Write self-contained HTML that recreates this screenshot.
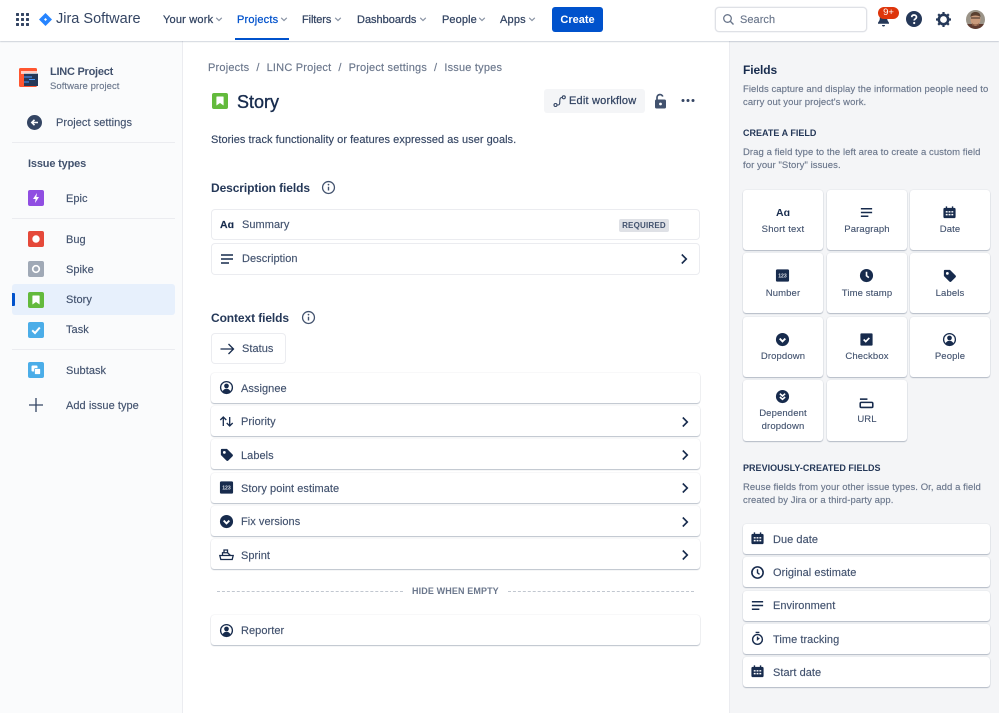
<!DOCTYPE html>
<html lang="en"><head><meta charset="utf-8"><title>Story - Issue types</title>
<style>
html,body{margin:0;padding:0;width:999px;height:713px;overflow:hidden;background:#fff}
body{position:relative;font-family:"Liberation Sans",sans-serif;color:#42526E;font-size:11px}
.t{position:absolute;white-space:nowrap;line-height:16px;height:16px;margin-top:1px;font-size:11px;color:#42526E;letter-spacing:.05px;-webkit-text-stroke:.15px currentColor}
.a{position:absolute}
.c{position:absolute;background:#fff;border-radius:3px;box-sizing:border-box}
.m{box-shadow:0 0 0 1px #ebecf0;left:212px;width:487px;height:29px}
.s{box-shadow:0 1px 1px rgba(9,30,66,.25),0 0 1px rgba(9,30,66,.2);height:30px}
.g{box-shadow:0 1px 1px rgba(9,30,66,.25),0 0 1px rgba(9,30,66,.2);width:80px}
.gt{position:absolute;left:0;right:0;margin-top:1px;text-align:center;font-size:9.5px;line-height:13px;color:#42526E;letter-spacing:.12px;-webkit-text-stroke:.12px currentColor}
.nav{font-size:11px;color:#344563;letter-spacing:.1px;-webkit-text-stroke:.25px currentColor}
.d{font-size:9.5px;color:#6B778C;letter-spacing:.07px;line-height:13px;height:26px}
.h{font-size:9px;font-weight:700;color:#253858;letter-spacing:.02px;-webkit-text-stroke:0}
.hr{position:absolute;height:1px;background:#ebecf0;left:12px;width:163px}
svg{position:absolute;overflow:visible}
</style></head><body>
<svg width="0" height="0" style="position:absolute"><defs>
<symbol id="para" viewBox="0 0 16 16"><path d="M2 3.200h12v1.600H2zM2 7.200h12v1.600H2zM2 11.200h8v1.600H2z" fill="#172B4D"/></symbol>
<symbol id="cal" viewBox="0 0 16 16"><path fill="#172B4D" fill-rule="evenodd" d="M3 3h1V1.500h1.500V3h5V1.500H12V3h1a1.500 1.500 0 0 1 1.500 1.500v8A1.500 1.500 0 0 1 13 14H3a1.500 1.500 0 0 1-1.500-1.500v-8A1.500 1.500 0 0 1 3 3zM4 6.500V8h2V6.500zm3 0V8h2V6.500zm3 0V8h2V6.500zM4 9.500V11h2V9.500zm3 0V11h2V9.500zm3 0V11h2V9.500z"/></symbol>
<symbol id="num" viewBox="0 0 16 16"><rect x="1" y="1.500" width="14" height="13" rx="1.500" fill="#172B4D"/><text x="8" y="10" text-anchor="middle" font-family="Liberation Sans, sans-serif" font-size="5.500" font-weight="700" fill="#dfe3ea">123</text></symbol>
<symbol id="clock" viewBox="0 0 16 16"><circle cx="8" cy="8" r="7" fill="#172B4D"/><path d="M8 4v4.300l2.500 2" stroke="#fff" stroke-width="1.700" fill="none"/></symbol>
<symbol id="clockO" viewBox="0 0 16 16"><circle cx="8" cy="8" r="6" fill="none" stroke="#172B4D" stroke-width="1.700"/><path d="M8 4.500v3.800l2.200 1.700" stroke="#172B4D" stroke-width="1.500" fill="none"/></symbol>
<symbol id="tag" viewBox="0 0 16 16"><path fill="#172B4D" fill-rule="evenodd" d="M2 3a1 1 0 0 1 1-1h5.500l6 6a1.300 1.300 0 0 1 0 1.800l-4.700 4.700a1.300 1.300 0 0 1-1.800 0l-6-6zm3.700 1.200a1.500 1.500 0 1 0 0 3 1.500 1.500 0 0 0 0-3z"/></symbol>
<symbol id="drop" viewBox="0 0 16 16"><circle cx="8" cy="8" r="7" fill="#172B4D"/><path d="M5 7l3 3 3-3" stroke="#fff" stroke-width="2" fill="none"/></symbol>
<symbol id="dep" viewBox="0 0 16 16"><circle cx="8" cy="8" r="7" fill="#172B4D"/><path d="M5.200 5l2.800 2.500L10.800 5M5.200 8.500L8 11l2.800-2.500" stroke="#fff" stroke-width="1.700" fill="none"/></symbol>
<symbol id="check" viewBox="0 0 16 16"><rect x="1.500" y="1.500" width="13" height="13" rx="1" fill="#172B4D"/><path d="M5 8l2.200 2.200L11 6.300" stroke="#fff" stroke-width="1.800" fill="none"/></symbol>
<symbol id="person" viewBox="0 0 16 16"><circle cx="8" cy="8" r="6.300" fill="#fff" stroke="#172B4D" stroke-width="1.400"/><circle cx="8" cy="6.300" r="2.500" fill="#172B4D"/><path d="M3.800 12.300c.6-2 2.200-3 4.200-3s3.600 1 4.200 3A6 6 0 0 1 8 14a6 6 0 0 1-4.200-1.700z" fill="#172B4D"/></symbol>
<symbol id="url" viewBox="0 0 16 16"><path d="M1 2.500h8v1.700H1z" fill="#172B4D"/><rect x="1.300" y="6.800" width="13.400" height="5.400" rx="1.200" fill="none" stroke="#172B4D" stroke-width="1.700"/></symbol>
<symbol id="chev" viewBox="0 0 16 16"><path d="M5.800 3.500L10.300 8l-4.500 4.500" stroke="#172B4D" stroke-width="1.600" fill="none"/></symbol>
<symbol id="dn" viewBox="0 0 10 10"><path d="M2.200 3.800L5 6.500l2.800-2.700" stroke="#8993a4" stroke-width="1.200" fill="none"/></symbol>
<symbol id="info" viewBox="0 0 16 16"><circle cx="8" cy="8" r="5.600" fill="none" stroke="#42526E" stroke-width="1.200"/><path d="M8 7.300v3.500" stroke="#42526E" stroke-width="1.300"/><circle cx="8" cy="5.300" r=".8" fill="#42526E"/></symbol>
<symbol id="story" viewBox="0 0 16 16"><rect width="16" height="16" rx="2" fill="#63BA3C"/><path d="M5 3.500h6a.6.6 0 0 1 .6.600v8.400L8 10l-3.600 2.500V4.100a.6.6 0 0 1 .6-.6z" fill="#fff"/></symbol>
</defs></svg>

<!-- Top bar -->
<div class="a" style="left:0;top:0;width:999px;height:41px;background:#fff;box-shadow:0 1px 1px rgba(9,30,66,.16),0 0 1px rgba(9,30,66,.1);z-index:3">
<svg style="left:16px;top:13px" width="13" height="13" viewBox="0 0 13 13"><g fill="#344563"><rect width="3" height="3" rx=".6"/><rect x="5" width="3" height="3" rx=".6"/><rect x="10" width="3" height="3" rx=".6"/><rect y="5" width="3" height="3" rx=".6"/><rect x="5" y="5" width="3" height="3" rx=".6"/><rect x="10" y="5" width="3" height="3" rx=".6"/><rect y="10" width="3" height="3" rx=".6"/><rect x="5" y="10" width="3" height="3" rx=".6"/><rect x="10" y="10" width="3" height="3" rx=".6"/></g></svg>
<svg style="left:39px;top:13px" width="13" height="13" viewBox="0 0 13 13"><path d="M6.500 0L13 6.500 6.500 13 0 6.500z" fill="#2684FF"/><path d="M6.500 5L8 6.500 6.500 8 5 6.500z" fill="#fff"/></svg>
<div class="t" style="left:56px;top:10px;font-size:14.5px;color:#344563;letter-spacing:0;-webkit-text-stroke:0">Jira Software</div>
<div class="t nav" style="left:163px;top:11px;letter-spacing:.2px">Your work</div><svg style="left:214px;top:14px" width="10" height="10"><use href="#dn"/></svg>
<div class="t nav" style="left:237px;top:11px;color:#0052CC;letter-spacing:.2px">Projects</div><svg style="left:279px;top:14px" width="10" height="10"><use href="#dn"/></svg>
<div class="a" style="left:235px;top:38px;width:54px;height:2px;background:#0052CC"></div>
<div class="t nav" style="left:302px;top:11px;letter-spacing:-.1px">Filters</div><svg style="left:333px;top:14px" width="10" height="10"><use href="#dn"/></svg>
<div class="t nav" style="left:357px;top:11px;letter-spacing:0">Dashboards</div><svg style="left:418px;top:14px" width="10" height="10"><use href="#dn"/></svg>
<div class="t nav" style="left:442px;top:11px">People</div><svg style="left:477px;top:14px" width="10" height="10"><use href="#dn"/></svg>
<div class="t nav" style="left:500px;top:11px;letter-spacing:.2px">Apps</div><svg style="left:527px;top:14px" width="10" height="10"><use href="#dn"/></svg>
<div class="a" style="left:552px;top:7px;width:51px;height:25px;background:#0052CC;border-radius:3px;color:#fff;text-align:center;line-height:26px;font-size:11px;font-weight:700">Create</div>
<div class="a" style="left:715px;top:7px;width:152px;height:25px;box-sizing:border-box;border:1px solid #DFE1E6;border-radius:4px;background:#fff;box-shadow:0 0 0 .5px #ebecf0"></div>
<svg style="left:722px;top:13px" width="13" height="13" viewBox="0 0 13 13"><circle cx="5.500" cy="5.500" r="3.800" fill="none" stroke="#6B778C" stroke-width="1.300"/><path d="M8.300 8.300l3.200 3.200" stroke="#6B778C" stroke-width="1.400"/></svg>
<div class="t" style="left:740px;top:11px;color:#6B778C">Search</div>
<svg style="left:876px;top:13px" width="15" height="15" viewBox="0 0 15 15"><path d="M7.500 1C4.800 1 3.800 3 3.800 5.500c0 2.500-1.800 3.500-1.800 4.500v.8h11V10c0-1-1.800-2-1.800-4.500C11.200 3 10.200 1 7.500 1zM6 12h3a1.500 1.500 0 0 1-3 0z" fill="#253858"/></svg>
<div class="a" style="left:878px;top:7px;width:21px;height:12px;background:#DE350B;border-radius:7px;color:#fff;font-size:9.5px;line-height:12px;text-align:center">9+</div>
<svg style="left:906px;top:11px" width="16" height="16" viewBox="0 0 16 16"><circle cx="8" cy="8" r="8" fill="#253858"/><path d="M5.700 6.200C5.800 4.800 6.800 4 8.100 4c1.400 0 2.400.9 2.400 2.100 0 1.800-2.300 1.900-2.300 3.400" stroke="#fff" stroke-width="1.700" fill="none"/><circle cx="8.200" cy="12" r="1.100" fill="#fff"/></svg>
<svg style="left:936px;top:12px" width="15" height="15" viewBox="0 0 15 15"><circle cx="7.500" cy="7.500" r="4.700" fill="none" stroke="#253858" stroke-width="2.600"/><path d="M7.500 0v3M7.500 12v3M0 7.500h3M12 7.500h3M2.200 2.200l2 2M10.800 10.800l2 2M2.200 12.800l2-2M10.800 4.200l2-2" stroke="#253858" stroke-width="2.200"/></svg>
<svg style="left:966px;top:10px" width="19" height="19" viewBox="0 0 19 19"><defs><clipPath id="av"><circle cx="9.500" cy="9.500" r="9.500"/></clipPath></defs><g clip-path="url(#av)"><rect width="19" height="19" fill="#9b9488"/><rect y="14" width="19" height="5" fill="#5f3b30"/><ellipse cx="9.500" cy="9.500" rx="5" ry="6.500" fill="#c99a7b"/><path d="M4.500 7c0-4 2.500-5 5-5s5 1 5 5c-2-2-8-2-10 0z" fill="#5a4030"/><path d="M5 8h9" stroke="#3a2a20" stroke-width="1"/><path d="M6 13c1 2 6 2 7 0v2.500H6z" fill="#8a5d45"/></g></svg>
</div>

<!-- Sidebar -->
<div class="a" style="left:0;top:41px;width:182px;height:672px;background:#FAFBFC;border-right:1px solid #ebecf0"></div>
<svg style="left:19px;top:68px" width="19" height="19" viewBox="0 0 19 19"><rect width="18" height="19" rx="1.500" fill="#FF5630"/><rect x="5" y="5" width="14" height="13" fill="#253858"/><rect x="2" y="3" width="17" height="3" fill="#fff" opacity=".7"/><path d="M5 9h8M10 11.500h6M5 14h5" stroke="#4C9AFF" stroke-width="1"/></svg>
<div class="t" style="left:50px;top:63px;font-weight:700;letter-spacing:-.25px;-webkit-text-stroke:0">LINC Project</div>
<div class="t" style="left:50px;top:78px;font-size:9.5px;color:#6B778C;letter-spacing:.05px">Software project</div>
<svg style="left:27px;top:115px" width="15" height="15" viewBox="0 0 15 15"><circle cx="7.500" cy="7.500" r="7.500" fill="#344563"/><path d="M11 7.500H5M7.500 4.800L4.800 7.500l2.700 2.700" stroke="#fff" stroke-width="1.600" fill="none"/></svg>
<div class="t" style="left:56px;top:114px">Project settings</div>
<div class="hr" style="top:142px"></div>
<div class="t" style="left:28px;top:155px;font-weight:700;letter-spacing:-.17px;-webkit-text-stroke:0">Issue types</div>
<svg style="left:28px;top:190px" width="16" height="16" viewBox="0 0 16 16"><rect width="16" height="16" rx="2" fill="#904EE2"/><path d="M9 3L5 9h2.600L7 13l4-6H8.400z" fill="#fff"/></svg>
<div class="t" style="left:66px;top:190px">Epic</div>
<div class="hr" style="top:218px"></div>
<svg style="left:28px;top:231px" width="16" height="16" viewBox="0 0 16 16"><rect width="16" height="16" rx="2" fill="#E5493A"/><circle cx="8" cy="8" r="3.700" fill="#fff"/></svg>
<div class="t" style="left:66px;top:231px">Bug</div>
<svg style="left:28px;top:261px" width="16" height="16" viewBox="0 0 16 16"><rect width="16" height="16" rx="2" fill="#A0A9B6"/><circle cx="8" cy="8" r="3.300" fill="none" stroke="#fff" stroke-width="1.700"/></svg>
<div class="t" style="left:66px;top:261px">Spike</div>
<div class="a" style="left:12px;top:284px;width:163px;height:31px;background:#E7F0FC;border-radius:3px"></div>
<div class="a" style="left:12px;top:293px;width:3px;height:13px;background:#0052CC;border-radius:0 1px 1px 0"></div>
<svg style="left:28px;top:292px" width="16" height="16"><use href="#story"/></svg>
<div class="t" style="left:66px;top:291px">Story</div>
<svg style="left:28px;top:322px" width="16" height="16" viewBox="0 0 16 16"><rect width="16" height="16" rx="2" fill="#4BADE8"/><path d="M4.200 8.300L7 11l4.800-5.500" stroke="#fff" stroke-width="2" fill="none"/></svg>
<div class="t" style="left:66px;top:321px">Task</div>
<div class="hr" style="top:349px"></div>
<svg style="left:28px;top:362px" width="16" height="16" viewBox="0 0 16 16"><rect width="16" height="16" rx="2" fill="#4BADE8"/><rect x="3.500" y="3.500" width="6" height="6" rx="1" fill="#fff"/><rect x="6.500" y="6.500" width="6" height="6" rx="1" fill="#fff" stroke="#4BADE8" stroke-width=".7"/></svg>
<div class="t" style="left:66px;top:362px">Subtask</div>
<svg style="left:29px;top:398px" width="14" height="14" viewBox="0 0 14 14"><path d="M7 0v14M0 7h14" stroke="#344563" stroke-width="1.300"/></svg>
<div class="t" style="left:66px;top:397px">Add issue type</div>

<!-- Main -->
<div class="t" style="left:208px;top:59px;color:#6B778C;letter-spacing:.2px"><span>Projects</span><span style="margin:0 7px">/</span><span>LINC Project</span><span style="margin:0 7px">/</span><span>Project settings</span><span style="margin:0 7px">/</span><span>Issue types</span></div>
<svg style="left:212px;top:93px" width="16" height="16"><use href="#story"/></svg>
<div class="t" style="left:237px;top:90px;font-size:18px;line-height:22px;height:22px;color:#172B4D;letter-spacing:0;-webkit-text-stroke:.35px currentColor">Story</div>
<div class="a" style="left:544px;top:89px;width:101px;height:24px;background:#F4F5F7;border-radius:3px"></div>
<svg style="left:553px;top:95px" width="13" height="13" viewBox="0 0 13 13"><circle cx="2.500" cy="10" r="1.500" fill="none" stroke="#344563" stroke-width="1.100"/><circle cx="10.800" cy="2.300" r="1.500" fill="none" stroke="#344563" stroke-width="1.100"/><path d="M4 10h1c1.500 0 1.800-1 1.800-3.500S7 2.500 9 2.500" fill="none" stroke="#344563" stroke-width="1.100"/></svg>
<div class="t" style="left:569px;top:92px;color:#344563;letter-spacing:.2px;-webkit-text-stroke:.25px currentColor">Edit workflow</div>
<svg style="left:653px;top:93px" width="15" height="16" viewBox="0 0 15 16"><path d="M4 7V4.500a3 3 0 0 1 5.800-1" fill="none" stroke="#42526E" stroke-width="1.700"/><rect x="2" y="6.500" width="11" height="9" rx="1.500" fill="#42526E"/><circle cx="7.500" cy="11" r="1.400" fill="#fff"/></svg>
<svg style="left:681px;top:98px" width="14" height="5" viewBox="0 0 14 5"><circle cx="2" cy="2.500" r="1.500" fill="#344563"/><circle cx="7" cy="2.500" r="1.500" fill="#344563"/><circle cx="12" cy="2.500" r="1.500" fill="#344563"/></svg>
<div class="t" style="left:211px;top:131px;color:#344563;letter-spacing:.03px">Stories track functionality or features expressed as user goals.</div>
<div class="t" style="left:211px;top:179px;font-size:12px;font-weight:700;color:#253858;letter-spacing:-.1px;-webkit-text-stroke:0">Description fields</div>
<svg style="left:320px;top:179px" width="17" height="17"><use href="#info"/></svg>

<div class="c m" style="top:210px"></div>
<div class="t" style="left:220px;top:216px;font-size:10.5px;font-weight:700;color:#172B4D;letter-spacing:0">Aɑ</div>
<div class="t" style="left:242px;top:216px">Summary</div>
<div class="a" style="left:619px;top:219px;width:50px;height:13px;background:#DFE1E6;border-radius:2px;color:#42526E;font-size:8px;font-weight:700;text-align:center;line-height:13px;letter-spacing:.2px">REQUIRED</div>
<div class="c m" style="top:244px;height:30px"></div>
<svg style="left:219px;top:251px" width="16" height="16"><use href="#para"/></svg>
<div class="t" style="left:242px;top:250px">Description</div>
<svg style="left:676px;top:251px" width="16" height="16"><use href="#chev"/></svg>

<div class="t" style="left:211px;top:309px;font-size:12px;font-weight:700;color:#253858;letter-spacing:-.1px;-webkit-text-stroke:0">Context fields</div>
<svg style="left:300px;top:309px" width="17" height="17"><use href="#info"/></svg>
<div class="c m" style="top:334px;left:212px;width:73px;height:29px"></div>
<svg style="left:219px;top:341px" width="16" height="16" viewBox="0 0 16 16"><path d="M1.500 8h12.500M9.500 3l5 5-5 5" stroke="#172B4D" stroke-width="1.300" fill="none"/></svg>
<div class="t" style="left:242px;top:340px">Status</div>

<div class="c s" style="left:211px;width:489px;top:373px"></div>
<svg style="left:219px;top:380px" width="15" height="15" viewBox="0 0 16 16"><use href="#person"/></svg>
<div class="t" style="left:241px;top:380px">Assignee</div>
<div class="c s" style="left:211px;width:489px;top:406px"></div>
<svg style="left:219px;top:414px" width="15" height="15" viewBox="0 0 15 15"><path d="M4.300 12V3M1.300 6l3-3 3 3M10.700 3v9M7.700 9l3 3 3-3" stroke="#172B4D" stroke-width="1.300" fill="none"/></svg>
<div class="t" style="left:241px;top:413px">Priority</div>
<svg style="left:677px;top:414px" width="16" height="16"><use href="#chev"/></svg>
<div class="c s" style="left:211px;width:489px;top:439px"></div>
<svg style="left:219px;top:447px" width="15" height="15" viewBox="0 0 16 16"><use href="#tag"/></svg>
<div class="t" style="left:241px;top:447px">Labels</div>
<svg style="left:677px;top:447px" width="16" height="16"><use href="#chev"/></svg>
<div class="c s" style="left:211px;width:489px;top:473px"></div>
<svg style="left:219px;top:480px" width="15" height="15" viewBox="0 0 16 16"><use href="#num"/></svg>
<div class="t" style="left:241px;top:480px">Story point estimate</div>
<svg style="left:677px;top:480px" width="16" height="16"><use href="#chev"/></svg>
<div class="c s" style="left:211px;width:489px;top:506px"></div>
<svg style="left:219px;top:514px" width="15" height="15" viewBox="0 0 16 16"><use href="#drop"/></svg>
<div class="t" style="left:241px;top:513px">Fix versions</div>
<svg style="left:677px;top:514px" width="16" height="16"><use href="#chev"/></svg>
<div class="c s" style="left:211px;width:489px;top:539px"></div>
<svg style="left:219px;top:547px" width="15" height="15" viewBox="0 0 15 15"><path d="M.8 8.500h13.400l-1 4H1.800zM3.500 8.500V5.700l5-.1L11.500 8.500M5 5.500V3h3.500v2.500" fill="none" stroke="#172B4D" stroke-width="1.300"/></svg>
<div class="t" style="left:241px;top:547px">Sprint</div>
<svg style="left:677px;top:547px" width="16" height="16"><use href="#chev"/></svg>

<div class="a" style="left:217px;top:591px;width:186px;border-top:1px dashed #C1C7D0"></div>
<div class="t" style="left:412px;top:582px;font-size:9px;font-weight:700;color:#6B778C;letter-spacing:.12px;-webkit-text-stroke:0">HIDE WHEN EMPTY</div>
<div class="a" style="left:508px;top:591px;width:186px;border-top:1px dashed #C1C7D0"></div>
<div class="c s" style="left:211px;width:489px;top:615px"></div>
<svg style="left:219px;top:623px" width="15" height="15" viewBox="0 0 16 16"><use href="#person"/></svg>
<div class="t" style="left:241px;top:622px">Reporter</div>

<!-- Right panel -->
<div class="a" style="left:729px;top:41px;width:270px;height:672px;background:#F4F5F7;border-left:1px solid #ebecf0;box-sizing:border-box"></div>
<div class="t" style="left:743px;top:61px;font-size:12px;font-weight:700;color:#172B4D;letter-spacing:-.1px;-webkit-text-stroke:0">Fields</div>
<div class="t d" style="left:743px;top:82px">Fields capture and display the information people need to<br>carry out your project's work.</div>
<div class="t h" style="left:743px;top:124px">CREATE A FIELD</div>
<div class="t d" style="left:743px;top:145px">Drag a field type to the left area to create a custom field<br>for your "Story" issues.</div>

<div class="c g" style="left:743px;top:190px;height:60px"><div class="a" style="left:0;right:0;top:16px;text-align:center;font-size:10.5px;line-height:14px;font-weight:700;color:#172B4D">Aɑ</div><div class="gt" style="top:32px;letter-spacing:.2px">Short text</div></div>
<div class="c g" style="left:827px;top:190px;height:60px"><svg style="left:32px;top:15px" width="15" height="15" viewBox="0 0 16 16"><use href="#para"/></svg><div class="gt" style="top:32px">Paragraph</div></div>
<div class="c g" style="left:910px;top:190px;height:60px"><svg style="left:32px;top:15px" width="15" height="15" viewBox="0 0 16 16"><use href="#cal"/></svg><div class="gt" style="top:32px">Date</div></div>

<div class="c g" style="left:743px;top:253px;height:60px"><svg style="left:32px;top:15px" width="15" height="15" viewBox="0 0 16 16"><use href="#num"/></svg><div class="gt" style="top:33px">Number</div></div>
<div class="c g" style="left:827px;top:253px;height:60px"><svg style="left:32px;top:15px" width="15" height="15" viewBox="0 0 16 16"><use href="#clock"/></svg><div class="gt" style="top:33px">Time stamp</div></div>
<div class="c g" style="left:910px;top:253px;height:60px"><svg style="left:32px;top:15px" width="15" height="15" viewBox="0 0 16 16"><use href="#tag"/></svg><div class="gt" style="top:33px">Labels</div></div>

<div class="c g" style="left:743px;top:317px;height:60px"><svg style="left:32px;top:15px" width="15" height="15" viewBox="0 0 16 16"><use href="#drop"/></svg><div class="gt" style="top:32px">Dropdown</div></div>
<div class="c g" style="left:827px;top:317px;height:60px"><svg style="left:32px;top:15px" width="15" height="15" viewBox="0 0 16 16"><use href="#check"/></svg><div class="gt" style="top:32px">Checkbox</div></div>
<div class="c g" style="left:910px;top:317px;height:60px"><svg style="left:32px;top:15px" width="15" height="15" viewBox="0 0 16 16"><use href="#person"/></svg><div class="gt" style="top:32px">People</div></div>

<div class="c g" style="left:743px;top:380px;height:61px"><svg style="left:32px;top:9px" width="15" height="15" viewBox="0 0 16 16"><use href="#dep"/></svg><div class="gt" style="top:26px">Dependent<br>dropdown</div></div>
<div class="c g" style="left:827px;top:380px;height:61px"><svg style="left:32px;top:16px" width="15" height="15" viewBox="0 0 16 16"><use href="#url"/></svg><div class="gt" style="top:32px">URL</div></div>

<div class="t h" style="left:743px;top:459px">PREVIOUSLY-CREATED FIELDS</div>
<div class="t d" style="left:743px;top:480px">Reuse fields from your other issue types. Or, add a field<br>created by Jira or a third-party app.</div>

<div class="c s" style="left:743px;width:247px;top:524px"></div>
<svg style="left:750px;top:531px" width="15" height="15" viewBox="0 0 16 16"><use href="#cal"/></svg>
<div class="t" style="left:773px;top:531px">Due date</div>
<div class="c s" style="left:743px;width:247px;top:557px"></div>
<svg style="left:750px;top:565px" width="15" height="15" viewBox="0 0 16 16"><use href="#clockO"/></svg>
<div class="t" style="left:773px;top:564px">Original estimate</div>
<div class="c s" style="left:743px;width:247px;top:591px"></div>
<svg style="left:750px;top:598px" width="15" height="15" viewBox="0 0 16 16"><use href="#para"/></svg>
<div class="t" style="left:773px;top:597px">Environment</div>
<div class="c s" style="left:743px;width:247px;top:624px"></div>
<svg style="left:750px;top:631px" width="15" height="15" viewBox="0 0 16 16"><circle cx="8" cy="9" r="5.200" fill="none" stroke="#172B4D" stroke-width="1.500"/><path d="M8 6v3.200l2-1.700M6 1.500h4" stroke="#172B4D" stroke-width="1.400" fill="none"/></svg>
<div class="t" style="left:773px;top:631px">Time tracking</div>
<div class="c s" style="left:743px;width:247px;top:657px"></div>
<svg style="left:750px;top:664px" width="15" height="15" viewBox="0 0 16 16"><use href="#cal"/></svg>
<div class="t" style="left:773px;top:664px">Start date</div>
</body></html>
